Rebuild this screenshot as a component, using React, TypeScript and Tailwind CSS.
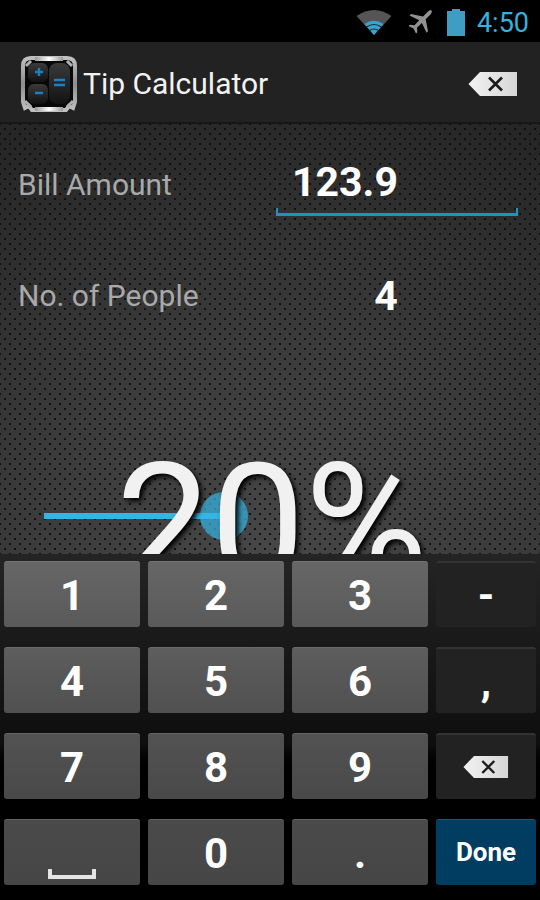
import React, { useState } from "react";

const font = "font-['Roboto','Noto_Sans',sans-serif]";

function BackspaceIcon({ className }: { className: string }) {
  return (
    <svg viewBox="0 0 50 26" className={className} aria-hidden="true">
      <defs>
        <linearGradient id="bs" x1="0" y1="0" x2="1" y2="0">
          <stop offset="0" stopColor="#f2f2f2" />
          <stop offset="1" stopColor="#d6d6d6" />
        </linearGradient>
      </defs>
      <path d="M0.500 13L12 1H49V25H12Z" fill="url(#bs)" />
      <path d="M21 6.500L34 19.500M34 6.500L21 19.500" stroke="#1c1c1c" strokeWidth="2.600" />
    </svg>
  );
}

function WifiIcon() {
  return (
    <svg viewBox="0 0 36 27" className="h-[27px] w-9" aria-hidden="true">
      <path d="M0.500 7Q18 -5 35.500 7L18 26Z" fill="#555" />
      <path d="M8.500 15Q18 8.500 27.500 15L18 26Z" fill="#3ba3d0" />
      <path d="M10.500 18Q18 13 25.500 18M13.500 21.500Q18 18.500 22.500 21.500" fill="none" stroke="#0b2b3a" strokeWidth="1.200" />
    </svg>
  );
}

function PlaneIcon() {
  return (
    <svg viewBox="0 0 24 24" className="h-6 w-6" aria-hidden="true">
      <path
        d="M23.500 0.500C22.500 -0.200 21 0.500 20 1.500L15 6.500L3 4L1.500 5.500L11.200 10.300L6.500 15.200L1.800 14.800L0.500 16L5.500 18.600L8 23.500L9.300 22.300L9 17.700L13.900 13L18.500 22.800L20 21.300L17.700 9.300L22.700 4.200C23.800 3 24.200 1.300 23.500 0.500Z"
        fill="#929292"
      />
    </svg>
  );
}

function BatteryIcon() {
  return (
    <svg viewBox="0 0 18 27" className="h-[27px] w-[18px]" aria-hidden="true">
      <path d="M5 0H13V2H18V27H0V2H5Z" fill="#3f9dc4" />
    </svg>
  );
}

function AppIcon() {
  return (
    <svg viewBox="0 0 56 56" className="h-14 w-14" aria-hidden="true">
      <defs>
        <linearGradient id="metal" x1="0" y1="0" x2="0" y2="1">
          <stop offset="0" stopColor="#c0c0c0" />
          <stop offset="0.500" stopColor="#8d8d8d" />
          <stop offset="1" stopColor="#c0c0c0" />
        </linearGradient>
        <linearGradient id="shine" x1="0" y1="0" x2="1" y2="0">
          <stop offset="0" stopColor="#999" />
          <stop offset="0.500" stopColor="#fff" />
          <stop offset="1" stopColor="#999" />
        </linearGradient>
        <linearGradient id="pad" x1="0" y1="0" x2="0" y2="1">
          <stop offset="0" stopColor="#3a3a3a" />
          <stop offset="1" stopColor="#121212" />
        </linearGradient>
      </defs>
      <path
        d="M10 2H46Q54 2 54 10V46L52 52L48 50L45 54H11L8 50L4 52L2 46V10Q2 2 10 2Z"
        fill="#080808"
        stroke="url(#metal)"
        strokeWidth="4"
      />
      <rect x="14" y="1" width="28" height="4" fill="url(#shine)" />
      <rect x="14" y="51" width="28" height="4" fill="url(#shine)" />
      <path d="M5 10L10 5M46 5L51 10M4 45L10 51M46 51L52 45" fill="none" stroke="#b0b0b0" strokeWidth="3" />
      <rect x="7" y="7" width="20" height="19" rx="6" fill="url(#pad)" />
      <rect x="7" y="28" width="20" height="20" rx="6" fill="url(#pad)" />
      <rect x="28" y="7" width="21" height="41" rx="8" fill="url(#pad)" />
      <path d="M14 16H22M18 12V20M14 37H22M33 24H44M33 29H44" stroke="#1c7fc4" strokeWidth="2.400" />
    </svg>
  );
}

const numberKey =
  "flex items-center justify-center rounded-[3px] border-t border-white/15 text-[42px] font-bold leading-none text-white";
const sideKey =
  "flex items-center justify-center rounded-[3px] border-t-2 border-[#333] bg-[#222] text-[42px] font-bold leading-none text-white";

const rows = [
  { tone: "bg-linear-to-b from-[#666] to-[#5a5a5a]", keys: ["1", "2", "3"], side: "-" },
  { tone: "bg-linear-to-b from-[#5d5d5d] to-[#505050]", keys: ["4", "5", "6"], side: "," },
  { tone: "bg-linear-to-b from-[#525252] to-[#494949]", keys: ["7", "8", "9"], side: "back" },
  { tone: "bg-linear-to-b from-[#4a4a4a] to-[#464646]", keys: [" ", "0", "."], side: "done" },
];

export default function App() {
  const [amount, setAmount] = useState("123.9");
  const erase = () => setAmount((a) => a.slice(0, -1));

  return (
    <div className={`flex min-h-screen flex-col bg-black ${font}`}>
      <div className="flex h-[42px] items-center justify-end pt-[2px] pr-[11px] text-[#35b0df]">
        <WifiIcon />
        <span className="ml-4">
          <PlaneIcon />
        </span>
        <span className="mr-3 ml-[15px]">
          <BatteryIcon />
        </span>
        <span className="pt-[2px] text-[27px] leading-8">4:50</span>
      </div>

      <header className="flex h-[82px] items-center border-b-2 border-[#171717] bg-[#222] pt-1 pr-[22px] pl-[21px]">
        <AppIcon />
        <h1 className="ml-[6px] flex-1 text-[30px] leading-9 text-[#f2f2f2]">Tip Calculator</h1>
        <button type="button" aria-label="Delete" onClick={erase}>
          <BackspaceIcon className="h-[26px] w-[50px]" />
        </button>
      </header>

      <main className="flex flex-1 flex-col overflow-hidden bg-[#2d2d2d] bg-[radial-gradient(circle,#0b0b0b_0,#0b0b0bcc_1px,transparent_1.6px),radial-gradient(circle,#0b0b0b_0,#0b0b0bcc_1px,transparent_1.6px),radial-gradient(ellipse_100%_110%_at_50%_100%,#474747_0%,#3b3b3b_45%,#262626_100%)] bg-[size:10px_10px,10px_10px,100%_100%] bg-[position:0_0,5px_5px,0_0]">
        <div className="flex items-center justify-between pt-[30px] pr-[22px] pl-[18px]">
          <label htmlFor="bill" className="text-[30px] leading-9 text-[#a9a9a9]">
            Bill Amount
          </label>
          <div className="flex w-[242px] flex-col">
            <input
              id="bill"
              inputMode="decimal"
              value={amount}
              onChange={(e) => setAmount(e.target.value)}
              className="h-[54px] w-full bg-transparent px-4 pt-1 text-[41px] font-bold text-white outline-none"
            />
            <div className="h-2 border-x-2 border-b-[3px] border-[#1e93bd]" />
          </div>
        </div>
        <div className="mt-[52px] flex items-center justify-between pr-[22px] pl-[18px]">
          <label htmlFor="people" className="text-[30px] leading-9 text-[#a9a9a9]">
            No. of People
          </label>
          <input
            id="people"
            inputMode="numeric"
            defaultValue="4"
            className="h-14 w-[242px] bg-transparent pt-[2px] pr-[22px] text-center text-[41px] font-bold text-white outline-none"
          />
        </div>
        <div className="relative mt-[118px] h-28 overflow-hidden">
          <input type="range" aria-label="Tip percentage" defaultValue="40" className="sr-only" />
          <div className="absolute top-[71px] left-11 h-[6px] w-[180px] bg-[#35b5e5]" />
          <div className="absolute top-[50px] left-[200px] h-12 w-12 rounded-full bg-[#35b5e5]/70" />
          <output className="absolute top-0 left-[116px] text-[168px] leading-none text-[#f1f1f1] [text-shadow:3px_3px_5px_#000]">
            20%
          </output>
        </div>
      </main>

      <section
        aria-label="Keypad"
        className="flex flex-col gap-5 bg-linear-to-b from-[#242424] via-[#0e0e0e] via-55% to-black to-65% px-1 pt-[7px] pb-[15px]"
      >
        {rows.map((row) => (
          <div key={row.side} className="grid h-[66px] grid-cols-[136fr_136fr_136fr_100fr] gap-2">
            {row.keys.map((k) => (
              <button
                type="button"
                key={k}
                aria-label={k === " " ? "Space" : k}
                onClick={() => setAmount((a) => a + k)}
                className={`${numberKey} ${row.tone} pt-[2px]`}
              >
                {k === " " ? <span className="mt-10 h-[10px] w-12 border-x-4 border-b-4 border-[#e4e4e4]" /> : k}
              </button>
            ))}
            {row.side === "back" && (
              <button type="button" aria-label="Backspace" onClick={erase} className={sideKey}>
                <BackspaceIcon className="h-6 w-[46px]" />
              </button>
            )}
            {row.side === "done" && (
              <button
                type="button"
                className="rounded-[3px] border-t border-[#1d5575] bg-[#003d60] text-[26px] font-bold text-white"
              >
                Done
              </button>
            )}
            {(row.side === "-" || row.side === ",") && (
              <button type="button" onClick={() => setAmount((a) => a + row.side)} className={`${sideKey} pt-[2px]`}>
                {row.side}
              </button>
            )}
          </div>
        ))}
      </section>
    </div>
  );
}
